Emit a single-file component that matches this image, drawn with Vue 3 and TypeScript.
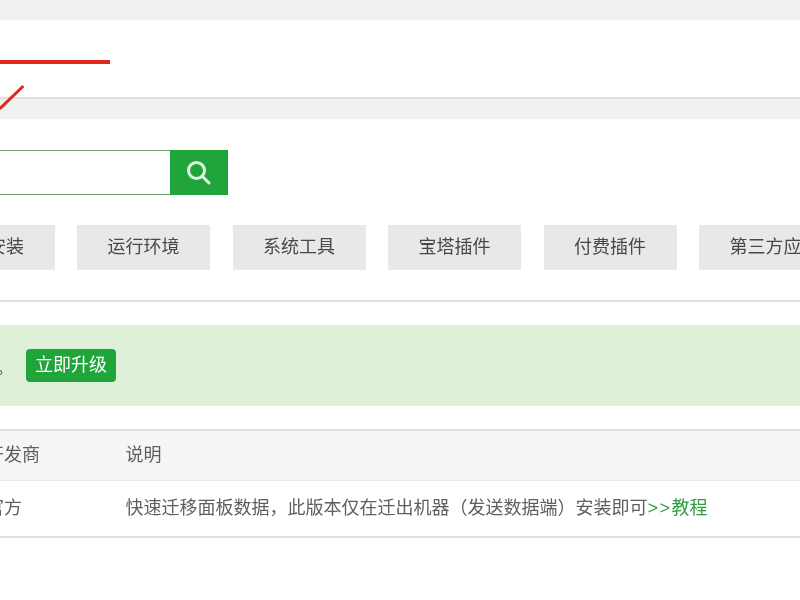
<script setup lang="ts">
const tabs: string[] = ['软件安装', '运行环境', '系统工具', '宝塔插件', '付费插件', '第三方应用']
</script>

<template>
  <div class="page">
    <div class="band-top"></div>
    <div class="head"></div>
    <div class="band-mid"></div>
    <div class="content">
      <div class="search">
        <div class="search-input"></div>
        <button class="search-btn" aria-label="搜索">
          <svg width="26" height="26" viewBox="0 0 26 26" fill="none" stroke="#dff3e0" stroke-width="3" stroke-linecap="round">
            <circle cx="10.5" cy="10.5" r="8" />
            <path d="M16.5 16.5l6.5 6.5" />
          </svg>
        </button>
      </div>
      <div class="tabs">
        <div v-for="t in tabs" :key="t" class="tab">{{ t }}</div>
      </div>
      <div class="divider"></div>
      <div class="notice">
        <span class="notice-text">。</span>
        <span class="upgrade">立即升级</span>
      </div>
      <div class="table">
        <div class="row header">
          <div class="vendor">开发商</div>
          <div>说明</div>
        </div>
        <div class="row">
          <div class="vendor">官方</div>
          <div>快速迁移面板数据，此版本仅在迁出机器（发送数据端）安装即可<span class="link"><span class="arrows">&gt;&gt;</span>教程</span></div>
        </div>
      </div>
    </div>
    <div class="mark mark-line"></div>
    <div class="mark mark-slash"></div>
  </div>
</template>

<style>
html, body { margin: 0; background: #fff; overflow: hidden; }
</style>

<style scoped>
.page {
  position: relative;
  width: 800px;
  height: 600px;
  overflow: hidden;
  background: #fff;
  font-family: "Liberation Sans", "Noto Sans CJK SC", sans-serif;
  font-size: 18px;
  color: #5f5f5f;
  filter: blur(0.5px);
}
.band-top { height: 20px; background: #f0f0f0; }
.head { height: 77px; }
.band-mid { height: 20px; border-top: 2px solid #e0e0e0; background: #f1f1f1; }
.content { padding-top: 31px; }
.search { display: flex; height: 45px; margin-left: -20px; width: 248px; }
.search-input { flex: 1; border: 1px solid #6d9f75; border-right: none; }
.search-btn {
  width: 58.5px;
  border: none;
  padding: 0;
  background: #20a53a;
  display: flex;
  align-items: center;
  justify-content: center;
}
.tabs { display: flex; gap: 22.5px; margin: 30px 0 0 -78.5px; }
.tab {
  flex: none;
  padding: 0 30.5px;
  height: 45px;
  line-height: 45px;
  background: #e8e8e8;
  color: #484848;
  white-space: nowrap;
}
.divider { height: 2px; margin-top: 30px; background: #e0e0e0; }
.notice {
  display: flex;
  align-items: center;
  gap: 8px;
  height: 81px;
  margin-top: 23px;
  background: #dff0d8;
}
.notice-text { margin-left: -4px; width: 22px; color: #555; }
.upgrade {
  width: 90px;
  height: 33px;
  line-height: 33px;
  text-align: center;
  background: #20a53a;
  color: #fff;
  border-radius: 4px;
}
.table { margin-top: 23px; border-top: 2px solid #e0e0e0; border-bottom: 2px solid #e0e0e0; }
.row {
  display: grid;
  grid-template-columns: 125.5px 1fr;
  height: 55px;
  line-height: 54px;
  white-space: nowrap;
}
.row.header {
  height: 49px;
  line-height: 49px;
  background: #f5f5f5;
  border-bottom: 1px solid #e8e8e8;
}
.vendor { margin-left: -14px; }
.link { color: #2f9e44; }
.arrows { letter-spacing: 1.5px; }
.mark { position: absolute; background: #e0281e; }
.mark-line { left: 0; top: 60px; width: 110px; height: 3.5px; }
.mark-slash {
  left: -5px;
  top: 96px;
  width: 33px;
  height: 3px;
  transform: rotate(-44deg);
}
</style>
